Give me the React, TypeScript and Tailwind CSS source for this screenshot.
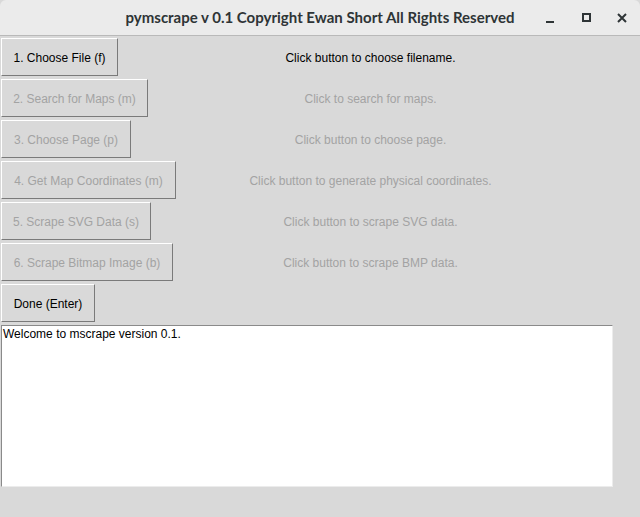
import React from "react";

const rows = [
  { btn: "1. Choose File (f)", w: "w-[117px]", label: "Click button to choose filename.", on: true },
  { btn: "2. Search for Maps (m)", w: "w-[147px]", label: "Click to search for maps.", on: false },
  { btn: "3. Choose Page (p)", w: "w-[130px]", label: "Click button to choose page.", on: false },
  { btn: "4. Get Map Coordinates (m)", w: "w-[175px]", label: "Click button to generate physical coordinates.", on: false },
  { btn: "5. Scrape SVG Data (s)", w: "w-[150px]", label: "Click button to scrape SVG data.", on: false },
  { btn: "6. Scrape Bitmap Image (b)", w: "w-[172px]", label: "Click button to scrape BMP data.", on: false },
];

function TkButton({ text, w, on }: { text: string; w: string; on: boolean }) {
  return (
    <button
      className={`${w} h-[38px] ml-[1px] pt-[1px] border border-t-white border-l-white border-b-[#7a7a7a] border-r-[#7a7a7a] bg-[#d9d9d9] text-[12px] ${on ? "text-black" : "text-[#a3a3a3]"}`}
      style={{ fontFamily: "'Liberation Sans', Arial, sans-serif" }}
    >
      {text}
    </button>
  );
}

export default function App() {
  return (
    <div className="w-[640px] h-[517px] bg-[#d9d9d9] flex flex-col overflow-hidden">
      <header className="h-[36px] bg-[#ebebeb] border-b border-[#b9b9b9] flex items-center relative rounded-t-md">
        <div
          className="flex-1 text-center text-[15px] font-bold text-[#2e3436]"
          style={{ fontFamily: "Lato, 'Noto Sans', sans-serif" }}
        >
          pymscrape v 0.1 Copyright Ewan Short All Rights Reserved
        </div>
        <div className="absolute right-0 top-0 h-full flex items-center">
          <div className="w-[40px] flex justify-center pt-[8px] pl-[3px]">
            <div className="w-[8px] h-[2px] bg-[#2e3436]" />
          </div>
          <div className="w-[36px] flex justify-center">
            <div className="w-[9px] h-[9px] border-2 border-[#2e3436]" />
          </div>
          <div className="w-[36px] flex justify-center">
            <svg width="10" height="10" viewBox="0 0 10 10">
              <path d="M1 1L9 9M9 1L1 9" stroke="#2e3436" strokeWidth="2" />
            </svg>
          </div>
        </div>
      </header>
      <div className="flex flex-col gap-[3px] pt-[2px]">
        {rows.map((r) => (
          <div key={r.btn} className="flex items-center h-[38px]">
            <div className="w-[177px] shrink-0">
              <TkButton text={r.btn} w={r.w} on={r.on} />
            </div>
            <div
              className={`w-[387px] pt-[2px] text-center text-[12px] ${r.on ? "text-black" : "text-[#a3a3a3]"}`}
              style={{ fontFamily: "'Liberation Sans', Arial, sans-serif" }}
            >
              {r.label}
            </div>
          </div>
        ))}
        <div className="flex items-center h-[38px]">
          <TkButton text="Done (Enter)" w="w-[94px]" on />
        </div>
      </div>
      <div
        className="mt-[3px] ml-[1px] w-[612px] h-[162px] bg-white border border-t-[#8a8a8a] border-l-[#8a8a8a] border-b-[#ececec] border-r-[#ececec] pt-[1px] text-[12px] text-black leading-[15px] px-[1px]"
        style={{ fontFamily: "'Liberation Sans', Arial, sans-serif" }}
      >
        Welcome to mscrape version 0.1.
      </div>
    </div>
  );
}
